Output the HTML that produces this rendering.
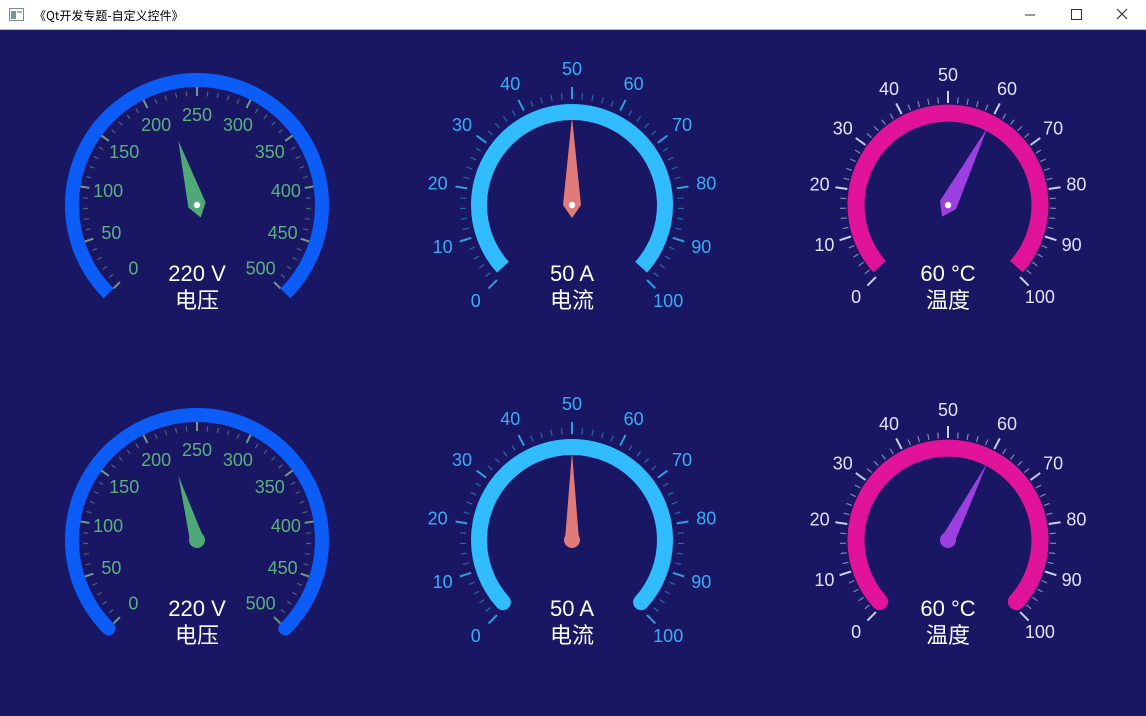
<!DOCTYPE html>
<html><head><meta charset="utf-8"><style>
html,body{margin:0;padding:0;width:1146px;height:716px;overflow:hidden;background:#191763;font-family:"Liberation Sans","Noto Sans CJK SC",sans-serif}
#tb{position:absolute;left:0;top:0;width:1146px;height:30px;background:#fff;border-bottom:1px solid #b8b8c8;box-sizing:border-box}
#tb .t{position:absolute;left:34px;top:7px;font-size:12px;color:#000;font-family:"Noto Sans CJK SC","Liberation Sans",sans-serif}
svg{position:absolute;left:0;top:30px}
</style></head><body>
<div id="tb">
<svg width="16" height="14" style="left:9px;top:8px"><rect x="0.5" y="0.5" width="14" height="12" fill="#fff" stroke="#7a8a90"/><rect x="2" y="3" width="5" height="8" fill="#6e9a9e"/><rect x="8" y="3" width="5" height="2" fill="#aac"/></svg>
<div class="t">《Qt开发专题-自定义控件》</div>
<svg width="146" height="30" style="left:1000px;top:0"><line x1="25" y1="15" x2="35" y2="15" stroke="#333" stroke-width="1"/><rect x="71.5" y="9.5" width="10" height="10" fill="none" stroke="#333"/><path d="M117 9 L127 19 M127 9 L117 19" stroke="#333" stroke-width="1.2"/></svg>
</div>
<svg id="s" width="1146" height="686" viewBox="0 30 1146 686"></svg>
<script>
var S=document.getElementById('s'),h='';
function P(cx,cy,r,a){a=a*Math.PI/180;return [cx+r*Math.cos(a),cy-r*Math.sin(a)];}
function arc(cx,cy,r,a0,a1){var p=P(cx,cy,r,a0),q=P(cx,cy,r,a1);return 'M'+p[0].toFixed(1)+' '+p[1].toFixed(1)+' A'+r+' '+r+' 0 1 1 '+q[0].toFixed(1)+' '+q[1].toFixed(1);}
function g(o){
 var cx=o.cx,cy=o.cy;
 h+='<path d="'+arc(cx,cy,o.r,225-o.ae,-45+o.ae)+'" fill="none" stroke="'+o.ac+'" stroke-width="'+o.aw+'" stroke-linecap="'+o.cap+'"/>';
 for(var i=0;i<=50;i++){var a=225-i*5.4,maj=i%5==0;
  var r1=o.t0,r2=maj?o.t1:o.t2;var p=P(cx,cy,r1,a),q=P(cx,cy,r2,a);
  h+='<line x1="'+p[0].toFixed(1)+'" y1="'+p[1].toFixed(1)+'" x2="'+q[0].toFixed(1)+'" y2="'+q[1].toFixed(1)+'" stroke="'+o.tc+'" stroke-width="'+(maj?2:1.2)+'" opacity="'+(maj?1:0.6)+'"/>';
  if(maj){var l=P(cx,cy,o.lr,a);h+='<text x="'+l[0].toFixed(1)+'" y="'+(l[1]+6).toFixed(1)+'" fill="'+o.lc+'" font-size="18" text-anchor="middle">'+(i/5*o.step)+'</text>';}
 }
 var na=225-o.f*270,t=P(cx,cy,o.nl,na);
 if(o.round){var b1=P(cx,cy,7,na+90),b2=P(cx,cy,7,na-90);
  h+='<path d="M'+t[0]+' '+t[1]+' L'+b1[0]+' '+b1[1]+' L'+b2[0]+' '+b2[1]+'Z" fill="'+o.nc+'"/><circle cx="'+cx+'" cy="'+cy+'" r="8" fill="'+o.nc+'"/>';
 }else{var b1=P(cx,cy,9,na+90),b2=P(cx,cy,9,na-90),tl=P(cx,cy,13,na+180);
  h+='<path d="M'+t[0]+' '+t[1]+' L'+b1[0]+' '+b1[1]+' L'+tl[0]+' '+tl[1]+' L'+b2[0]+' '+b2[1]+'Z" fill="'+o.nc+'"/><circle cx="'+cx+'" cy="'+cy+'" r="3.2" fill="#fff"/>';}
 h+='<text x="'+cx+'" y="'+(cy+76)+'" fill="#fff" font-size="22" text-anchor="middle">'+o.v+'</text>';
 h+='<text x="'+cx+'" y="'+(cy+103)+'" fill="#fff" font-size="22" text-anchor="middle" font-family="Noto Sans CJK SC,sans-serif">'+o.n+'</text>';
}
[0,335].forEach(function(dy,k){var rd=k==1,cap=rd?'round':'butt';
 g({cx:197,cy:205+dy,r:125,aw:14,ae:0,ac:'#0c5cf8',cap:cap,t0:109,t1:118,t2:114,tc:'#6f9a88',lr:90,lc:'#5cb07c',step:50,f:0.44,nl:67,nc:'#4fa878',v:'220 V',n:'电压',round:rd});
 g({cx:572,cy:205+dy,r:93,aw:16,ae:3,ac:'#30bcff',cap:cap,t0:106,t1:118,t2:112,tc:'#2e9ee0',lr:136,lc:'#38aef4',step:10,f:0.5,nl:88,nc:'#e07a78',v:'50 A',n:'电流',round:rd});
 g({cx:948,cy:205+dy,r:92,aw:17,ae:3,ac:'#e0139a',cap:cap,t0:102,t1:114,t2:108,tc:'#c8d0f0',lr:130,lc:'#dde3ff',step:10,f:0.6,nl:87,nc:'#9b3fe0',v:'60 °C',n:'温度',round:rd});
});
S.innerHTML=h;
</script>
</body></html>
